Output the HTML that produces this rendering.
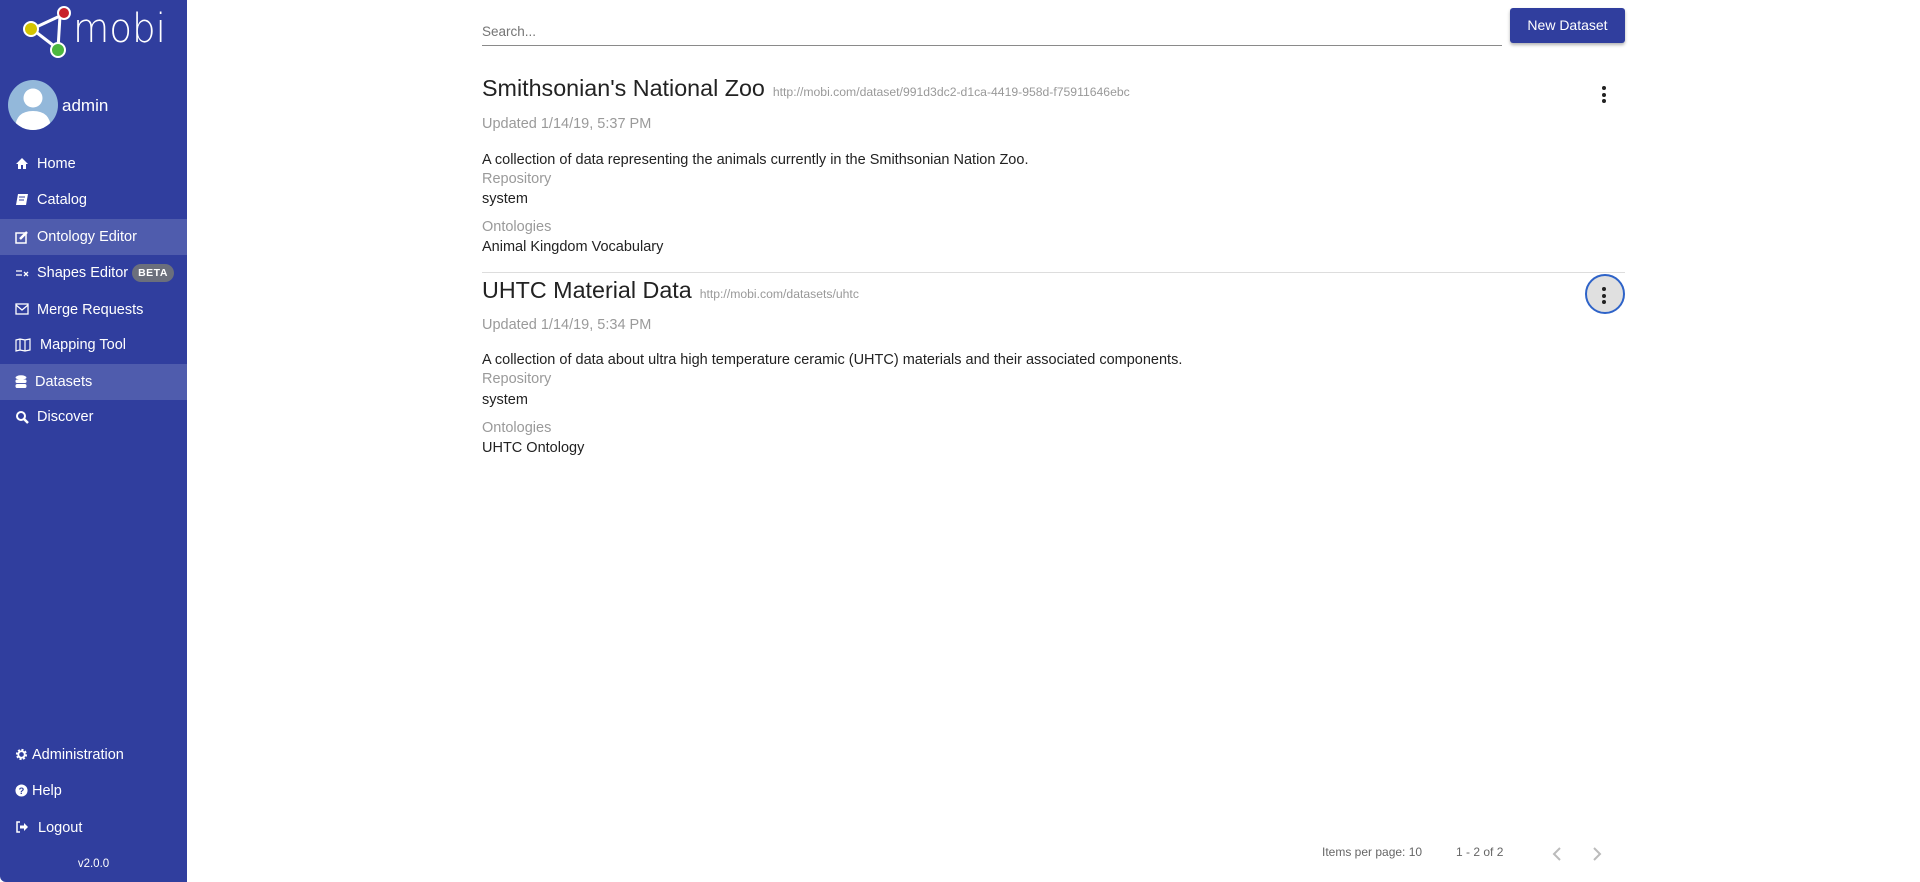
<!DOCTYPE html>
<html><head><style>
*{margin:0;padding:0;box-sizing:border-box}
body{width:1920px;height:882px;font-family:"Liberation Sans",sans-serif;background:#fff;position:relative;overflow:hidden;color:#212121}
.side{position:absolute;left:0;top:0;width:187px;height:882px;background:#303e9e;color:#fff;border-bottom-left-radius:6px}
.abs{position:absolute}
.nav{position:absolute;left:0;width:187px;height:36px;font-size:14.5px;line-height:36px;padding-left:37px}
.nav svg{position:absolute;left:15px;top:11px}
.hl{background:#4f5cad}
.beta{display:inline-block;background:#6b6f7c;border-radius:10px;font-size:10.5px;font-weight:bold;line-height:18px;padding:0 6px;margin-left:4px;vertical-align:1px;letter-spacing:.5px}
.t{position:absolute;left:482px;white-space:nowrap}
.title{font-size:23.3px;color:#222}
.url{font-size:12.2px;color:#999;margin-left:8px}
.gray{color:#9a9a9a;font-size:14.5px}
.txt{font-size:14.5px;color:#222}
.dots{position:absolute;width:4px}
.dots i{display:block;width:4px;height:4px;border-radius:2px;background:#222;margin-bottom:2.5px}
</style></head><body>
<div class="side">
  <svg class="abs" style="left:20px;top:4px" width="150" height="56" viewBox="0 0 150 56">
    <line x1="12" y1="25" x2="40" y2="12" stroke="#fff" stroke-width="3"/>
    <line x1="12" y1="25" x2="38" y2="45" stroke="#fff" stroke-width="3"/>
    <line x1="40" y1="12" x2="38" y2="45" stroke="#fff" stroke-width="3"/>
    <circle cx="11" cy="25" r="7" fill="#d4c400" stroke="#fff" stroke-width="2"/>
    <circle cx="44" cy="9" r="6" fill="#c8202a" stroke="#fff" stroke-width="2"/>
    <circle cx="38" cy="46" r="7" fill="#4cb73e" stroke="#fff" stroke-width="2"/>
    <text x="53" y="38" fill="#fff" font-size="40" font-family="DejaVu Sans" font-weight="200" textLength="93" lengthAdjust="spacingAndGlyphs">mobi</text>
  </svg>
  <svg class="abs" style="left:8px;top:80px" width="50" height="50" viewBox="0 0 50 50">
    <circle cx="25" cy="25" r="25" fill="#93b8da"/>
    <clipPath id="c"><circle cx="25" cy="25" r="25"/></clipPath>
    <g clip-path="url(#c)" fill="#fff"><circle cx="25" cy="18" r="9.5"/><path d="M7 50 Q7 31 25 31 Q43 31 43 50Z"/></g>
  </svg>
  <div class="abs" style="left:62px;top:96px;font-size:17px">admin</div>
  <div class="nav" style="top:146px"><svg width="14" height="13" viewBox="0 0 14 13"><path d="M7 1 L1 7 H3 V12 H6 V8 H8 V12 H11 V7 H13Z" fill="#fff"/></svg>Home</div>
  <div class="nav" style="top:182px"><svg width="14" height="14" viewBox="0 0 14 14"><path d="M3 1 H13 L11 12 H1Z" fill="#fff"/><path d="M4 4 H10 M4 7 H9" stroke="#303e9e"/></svg>Catalog</div>
  <div class="nav hl" style="top:219px"><svg width="14" height="14" viewBox="0 0 14 14"><rect x="1" y="3" width="10" height="10" fill="none" stroke="#fff" stroke-width="1.5"/><path d="M5 9 L12 2" stroke="#fff" stroke-width="2.5"/></svg>Ontology Editor</div>
  <div class="nav" style="top:255px"><svg width="14" height="14" viewBox="0 0 14 14"><path d="M1 5 H7 M1 9 H7 M9 6 L13 10 M13 6 L9 10" stroke="#fff" stroke-width="1.3"/></svg>Shapes Editor<span class="beta">BETA</span></div>
  <div class="nav" style="top:292px"><svg width="14" height="12" viewBox="0 0 14 12"><rect x="1" y="1" width="12" height="10" fill="none" stroke="#fff" stroke-width="1.3"/><path d="M1 2 L7 7 L13 2" fill="none" stroke="#fff" stroke-width="1.3"/></svg>Merge Requests</div>
  <div class="nav" style="top:327px;padding-left:40px"><svg width="16" height="14" viewBox="0 0 16 14"><path d="M1 2 L5 1 L10 2 L15 1 V12 L10 13 L5 12 L1 13Z M5 1 V12 M10 2 V13" fill="none" stroke="#fff" stroke-width="1.2"/></svg>Mapping Tool</div>
  <div class="nav hl" style="top:364px;padding-left:35px"><svg width="12" height="14" viewBox="0 0 12 14"><ellipse cx="6" cy="2.5" rx="5.5" ry="2.2" fill="#fff"/><rect x=".5" y="4.5" width="11" height="3.5" rx="1.5" fill="#fff"/><rect x=".5" y="9" width="11" height="4" rx="1.8" fill="#fff"/></svg>Datasets</div>
  <div class="nav" style="top:399px"><svg width="14" height="14" viewBox="0 0 14 14"><circle cx="6" cy="6" r="4" fill="none" stroke="#fff" stroke-width="2"/><path d="M9 9 L13 13" stroke="#fff" stroke-width="2.5"/></svg>Discover</div>
  <div class="nav" style="top:737px;padding-left:32px"><svg width="13" height="13" viewBox="0 0 14 14"><circle cx="7" cy="7" r="4.5" fill="none" stroke="#fff" stroke-width="3" stroke-dasharray="2 1.5"/><circle cx="7" cy="7" r="3.5" fill="none" stroke="#fff" stroke-width="2"/></svg>Administration</div>
  <div class="nav" style="top:773px;padding-left:32px"><svg width="13" height="13" viewBox="0 0 14 14"><circle cx="7" cy="7" r="6.5" fill="#fff"/><text x="7" y="11" font-size="10" font-weight="bold" text-anchor="middle" fill="#303e9e" font-family="Liberation Sans">?</text></svg>Help</div>
  <div class="nav" style="top:810px;padding-left:38px"><svg width="14" height="12" viewBox="0 0 14 12"><path d="M5 1 H2 V11 H5" fill="none" stroke="#fff" stroke-width="1.5"/><path d="M5 4.5 H9 V2 L13 6 L9 10 V7.5 H5Z" fill="#fff"/></svg>Logout</div>
  <div class="abs" style="left:0;width:187px;text-align:center;top:858px;font-size:11.5px">v2.0.0</div>
</div>

<div class="abs" style="left:482px;top:24px;font-size:13.5px;color:#757575">Search...</div>
<div class="abs" style="left:482px;top:45px;width:1020px;height:1px;background:#8a8a8a"></div>
<div class="abs" style="left:1510px;top:8px;width:115px;height:35px;background:#303e9e;color:#fff;border-radius:3px;font-size:14px;line-height:35px;text-align:center;box-shadow:0 2px 3px rgba(0,0,0,.3)">New Dataset</div>

<div class="t" style="top:75px"><span class="title">Smithsonian's National Zoo</span><span class="url">http://mobi.com/dataset/991d3dc2-d1ca-4419-958d-f75911646ebc</span></div>
<div class="t gray" style="top:116px">Updated 1/14/19, 5:37 PM</div>
<div class="t txt" style="top:152px">A collection of data representing the animals currently in the Smithsonian Nation Zoo.</div>
<div class="t gray" style="top:171px">Repository</div>
<div class="t txt" style="top:191px">system</div>
<div class="t gray" style="top:219px">Ontologies</div>
<div class="t txt" style="top:239px">Animal Kingdom Vocabulary</div>
<div class="dots" style="left:1602px;top:86px"><i></i><i></i><i></i></div>
<div class="abs" style="left:482px;top:272px;width:1143px;height:1px;background:#ddd"></div>

<div class="abs" style="left:1585px;top:274px;width:40px;height:40px;border-radius:50%;background:#e0e0e0;border:2px solid #2e63c8"></div>
<div class="dots" style="left:1602px;top:287px"><i></i><i></i><i></i></div>
<div class="t" style="top:277px"><span class="title">UHTC Material Data</span><span class="url">http://mobi.com/datasets/uhtc</span></div>
<div class="t gray" style="top:317px">Updated 1/14/19, 5:34 PM</div>
<div class="t txt" style="top:352px">A collection of data about ultra high temperature ceramic (UHTC) materials and their associated components.</div>
<div class="t gray" style="top:371px">Repository</div>
<div class="t txt" style="top:392px">system</div>
<div class="t gray" style="top:420px">Ontologies</div>
<div class="t txt" style="top:440px">UHTC Ontology</div>

<div class="abs" style="left:1322px;top:845px;font-size:12px;color:#666">Items per page: 10</div>
<div class="abs" style="left:1456px;top:845px;font-size:12px;color:#666">1 - 2 of 2</div>
<svg class="abs" style="left:1550px;top:845px" width="60" height="18" viewBox="0 0 60 18"><path d="M10 3 L4 9 L10 15" fill="none" stroke="#bbb" stroke-width="2"/><path d="M44 3 L50 9 L44 15" fill="none" stroke="#bbb" stroke-width="2"/></svg>
</body></html>
